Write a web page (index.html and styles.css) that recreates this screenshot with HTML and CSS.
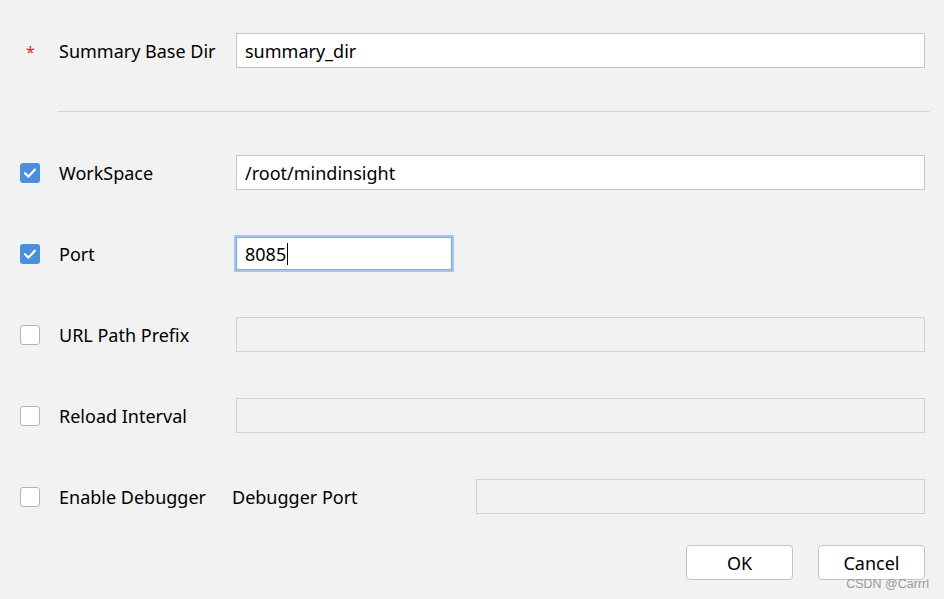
FILE: index.html
```html
<!DOCTYPE html>
<html>
<head>
<meta charset="utf-8">
<link rel="stylesheet" href="styles.css">
</head>
<body>
<div class="form">
  <div class="row">
    <div class="lead"><span class="req">*</span></div>
    <div class="label">Summary Base Dir</div>
    <div class="field">summary_dir</div>
  </div>
  <div class="divider"></div>
  <div class="row">
    <div class="lead"><span class="cb checked"><svg viewBox="0 0 20 20" width="20" height="20"><path d="M5 10.2 L8.5 13.6 L15 6.6" fill="none" stroke="#fff" stroke-width="2.2" stroke-linecap="round" stroke-linejoin="round"/></svg></span></div>
    <div class="label">WorkSpace</div>
    <div class="field">/root/mindinsight</div>
  </div>
  <div class="row">
    <div class="lead"><span class="cb checked"><svg viewBox="0 0 20 20" width="20" height="20"><path d="M5 10.2 L8.5 13.6 L15 6.6" fill="none" stroke="#fff" stroke-width="2.2" stroke-linecap="round" stroke-linejoin="round"/></svg></span></div>
    <div class="label">Port</div>
    <div class="field focus">8085<span class="caret"></span></div>
  </div>
  <div class="row">
    <div class="lead"><span class="cb"></span></div>
    <div class="label">URL Path Prefix</div>
    <div class="field disabled"></div>
  </div>
  <div class="row">
    <div class="lead"><span class="cb"></span></div>
    <div class="label">Reload Interval</div>
    <div class="field disabled"></div>
  </div>
  <div class="row">
    <div class="lead"><span class="cb"></span></div>
    <div class="label">Enable Debugger</div>
    <div class="label2">Debugger Port</div>
    <div class="field disabled"></div>
  </div>
  <div class="buttons">
    <div class="btn">OK</div>
    <div class="btn">Cancel</div>
  </div>
</div>
<div class="watermark">CSDN @Carrrl</div>
</body>
</html>
```
FILE: styles.css
```css
html, body {
  margin: 0;
  padding: 0;
  background: #f2f2f2;
  width: 944px;
  height: 599px;
  overflow: hidden;
  font-family: "Noto Sans", "Open Sans", sans-serif;
  color: #000;
}
.form {
  padding: 33px 19px 0 20px;
  display: flex;
  flex-direction: column;
}
.row {
  display: flex;
  align-items: center;
  height: 35px;
  margin-bottom: 46px;
}
.row:first-child { margin-bottom: 0; }
.divider {
  height: 1px;
  background: #d4d4d4;
  margin: 43px -5px 43px 38px;
}
.lead {
  width: 39px;
  flex: none;
  display: flex;
  align-items: center;
}
.req {
  color: #e8202a;
  font-size: 16px;
  margin-left: 6px;
  line-height: 1;
  margin-top: 2px;
}
.label {
  width: 177px;
  flex: none;
  font-size: 18px;
}
.label2 {
  width: 244px;
  flex: none;
  font-size: 18px;
  margin-left: -4px;
}
.field {
  flex: 1;
  height: 35px;
  box-sizing: border-box;
  background: #fff;
  border: 1px solid #c6c6c6;
  font-size: 18px;
  padding-left: 8px;
  display: flex;
  align-items: center;
}
.field.disabled {
  background: #f2f2f2;
  border-color: #d2d2d2;
}
.field.focus {
  flex: none;
  width: 216px;
  border: 1px solid #7eaae0;
  box-shadow: 0 0 0 2px #a4c6ee;
  height: 33px;
}
.caret {
  display: inline-block;
  width: 1px;
  height: 22px;
  background: #000;
  margin-left: 1px;
}
.cb {
  width: 20px;
  height: 20px;
  box-sizing: border-box;
  border-radius: 3px;
  background: #fff;
  border: 1.5px solid #b4b4b4;
  display: block;
}
.cb.checked {
  background: #4a8fdc;
  border: none;
}
.cb svg { display: block; }
.buttons {
  display: flex;
  justify-content: flex-end;
  gap: 25px;
  margin-top: -15px;
}
.btn {
  width: 107px;
  height: 35px;
  box-sizing: border-box;
  background: #fff;
  border: 1px solid #c4c4c4;
  border-radius: 4px;
  font-size: 18px;
  display: flex;
  align-items: center;
  justify-content: center;
}
.watermark {
  position: absolute;
  right: 15px;
  top: 577px;
  font-family: "Liberation Sans", Arial, sans-serif;
  font-size: 12.5px;
  color: #9a9a9a;
}
```
